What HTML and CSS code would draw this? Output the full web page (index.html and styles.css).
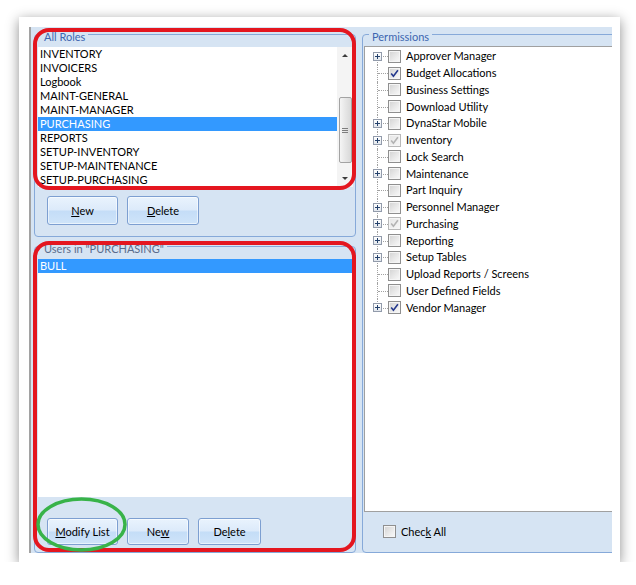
FILE: index.html
```html
<!DOCTYPE html>
<html>
<head>
<meta charset="utf-8">
<title>Roles</title>
<link rel="stylesheet" href="styles.css">
</head>
<body>
<div class="card">
  <div class="app">
    <div class="left">
      <div class="group roles">
        <div class="group-title">All Roles</div>
        <div class="listbox list-roles">
          <div class="items">
            <div class="item">INVENTORY</div>
            <div class="item">INVOICERS</div>
            <div class="item">Logbook</div>
            <div class="item">MAINT-GENERAL</div>
            <div class="item">MAINT-MANAGER</div>
            <div class="item sel">PURCHASING</div>
            <div class="item">REPORTS</div>
            <div class="item">SETUP-INVENTORY</div>
            <div class="item">SETUP-MAINTENANCE</div>
            <div class="item">SETUP-PURCHASING</div>
          </div>
          <div class="vscroll">
            <div class="arr up"></div>
            <div class="sgap"></div>
            <div class="thumb"><span class="grip"></span></div>
            <div class="sfill"></div>
            <div class="arr down"></div>
          </div>
        </div>
        <div class="buttons">
          <button class="btn b71"><u>N</u>ew</button>
          <button class="btn b72"><u>D</u>elete</button>
        </div>
      </div>
      <div class="group users">
        <div class="group-title muted">Users in "PURCHASING"</div>
        <div class="listbox list-users">
          <div class="items">
            <div class="item sel">BULL</div>
          </div>
        </div>
        <div class="buttons">
          <button class="btn b71"><u>M</u>odify List</button>
          <button class="btn b62">Ne<u>w</u></button>
          <button class="btn b63">De<u>l</u>ete</button>
        </div>
      </div>
    </div>
    <div class="right">
      <div class="group perms">
        <div class="group-title">Permissions</div>
        <div class="tree">
          <div class="row first"><span class="exp-cell"><span class="exp"></span></span><span class="cb"></span><span class="label">Approver Manager</span></div>
          <div class="row"><span class="exp-cell"></span><span class="cb"><svg viewBox="0 0 11 11"><path d="M2.2 5.6 L4.4 8.2 L8.9 2.3"/></svg></span><span class="label">Budget Allocations</span></div>
          <div class="row"><span class="exp-cell"></span><span class="cb"></span><span class="label">Business Settings</span></div>
          <div class="row"><span class="exp-cell"></span><span class="cb"></span><span class="label">Download Utility</span></div>
          <div class="row"><span class="exp-cell"><span class="exp"></span></span><span class="cb"></span><span class="label">DynaStar Mobile</span></div>
          <div class="row"><span class="exp-cell"><span class="exp"></span></span><span class="cb dim"><svg viewBox="0 0 11 11"><path d="M2.2 5.6 L4.4 8.2 L8.9 2.3"/></svg></span><span class="label">Inventory</span></div>
          <div class="row"><span class="exp-cell"></span><span class="cb"></span><span class="label">Lock Search</span></div>
          <div class="row"><span class="exp-cell"><span class="exp"></span></span><span class="cb"></span><span class="label">Maintenance</span></div>
          <div class="row"><span class="exp-cell"></span><span class="cb"></span><span class="label">Part Inquiry</span></div>
          <div class="row"><span class="exp-cell"><span class="exp"></span></span><span class="cb"></span><span class="label">Personnel Manager</span></div>
          <div class="row"><span class="exp-cell"><span class="exp"></span></span><span class="cb dim"><svg viewBox="0 0 11 11"><path d="M2.2 5.6 L4.4 8.2 L8.9 2.3"/></svg></span><span class="label">Purchasing</span></div>
          <div class="row"><span class="exp-cell"><span class="exp"></span></span><span class="cb"></span><span class="label">Reporting</span></div>
          <div class="row"><span class="exp-cell"><span class="exp"></span></span><span class="cb"></span><span class="label">Setup Tables</span></div>
          <div class="row"><span class="exp-cell"></span><span class="cb"></span><span class="label">Upload Reports / Screens</span></div>
          <div class="row"><span class="exp-cell"></span><span class="cb"></span><span class="label">User Defined Fields</span></div>
          <div class="row last"><span class="exp-cell"><span class="exp"></span></span><span class="cb"><svg viewBox="0 0 11 11"><path d="M2.2 5.6 L4.4 8.2 L8.9 2.3"/></svg></span><span class="label">Vendor Manager</span></div>
        </div>
        <div class="checkall"><span class="cb"></span><span class="label">Chec<u>k</u> All</span></div>
      </div>
    </div>
  </div>
  <svg class="annot" width="601" height="545" viewBox="0 0 601 545">
    <rect x="16" y="13" width="319" height="158" rx="14" ry="14" fill="none" stroke="#e4161f" stroke-width="4"/>
    <rect x="16" y="226" width="319" height="307" rx="14" ry="14" fill="none" stroke="#e4161f" stroke-width="4"/>
    <ellipse cx="62.5" cy="507.5" rx="43.5" ry="25.5" fill="none" stroke="#38b349" stroke-width="3.5"/>
  </svg>
</div>
</body>
</html>
```

FILE: styles.css
```css
* { box-sizing: border-box; }
html, body { margin: 0; padding: 0; background: #fff; }
body {
  font-family: "Lato", "Noto Sans", sans-serif;
  font-size: 11px;
  color: #000;
}
.card {
  position: relative;
  margin: 17px 0 0 19px;
  width: 601px;
  height: 545px;
  padding: 10px 8px 9px 10px;
  background: #fff;
  box-shadow: 0 3px 12px rgba(0, 0, 0, 0.45);
}
.app {
  display: flex;
  height: 526px;
  background: #d6e4f3;
  border-left: 2px solid #a2a2a2;
  overflow: hidden;
}
.left {
  width: 331px;
  flex: none;
  padding: 7px 6px 0 3px;
}
.right {
  flex: 1;
  padding-top: 7px;
}
.group {
  position: relative;
  border: 1px solid #86a9d9;
  border-radius: 4px;
}
.group-title {
  position: absolute;
  left: 6px;
  top: -5px;
  padding: 0 3px;
  line-height: 14px;
  background: #d6e4f3;
  color: #3d66b0;
  white-space: nowrap;
}
.group-title.muted { color: #5a6c8c; }
.roles { height: 203px; padding: 12px 2px 0 3px; }
.users { height: 307px; margin-top: 9px; padding: 12px 2px 0 3px; }
.listbox { display: flex; background: #fff; }
.list-roles { height: 140px; }
.list-users { height: 238px; }
.items { flex: 1; }
.item {
  height: 14px;
  line-height: 14px;
  padding-left: 2px;
  white-space: nowrap;
}
.item.sel { background: #3399ff; color: #fff; }

.vscroll {
  width: 16px;
  flex: none;
  display: flex;
  flex-direction: column;
  align-items: center;
  background: #f4f4f4;
}
.arr {
  width: 16px;
  height: 17px;
  display: flex;
  align-items: center;
  justify-content: center;
}
.arr.up::before {
  content: "";
  border-left: 3px solid transparent;
  border-right: 3px solid transparent;
  border-bottom: 3px solid #3c3c3c;
}
.arr.down::before {
  content: "";
  border-left: 3px solid transparent;
  border-right: 3px solid transparent;
  border-top: 3px solid #3c3c3c;
}
.sgap { height: 33px; }
.sfill { flex: 1; }
.thumb {
  width: 13px;
  height: 66px;
  border: 1px solid #a3a3a3;
  border-radius: 2px;
  background: linear-gradient(90deg, #f5f5f5, #e6e6e6 50%, #d8d8d8);
  display: flex;
  align-items: center;
  justify-content: center;
}
.grip {
  width: 6px;
  height: 5px;
  background: repeating-linear-gradient(#7d7d7d 0 1px, transparent 1px 2px);
}

.buttons { display: flex; gap: 9px; padding-left: 9px; }
.roles .buttons { margin-top: 9px; }
.users .buttons { margin-top: 21px; }
.btn {
  height: 29px;
  padding: 0;
  font: inherit;
  color: #000;
  border: 1px solid #7d9fd1;
  border-radius: 3px;
  background: linear-gradient(#e9f3fd 0%, #dceafa 48%, #c4ddf7 52%, #cfe4f9 100%);
  box-shadow: inset 0 0 0 1px rgba(255, 255, 255, 0.55);
}
.users .btn { height: 27px; }
.b71 { width: 71px; }
.b72 { width: 72px; }
.b62 { width: 62px; }
.b63 { width: 63px; }

.perms { width: 270px; height: 519px; padding: 11px 0 0 1px; }
.tree {
  height: 466px;
  border: 1px solid #a0a0a0;
  border-right: none;
  background: #fff;
  padding-top: 1px;
}
.row {
  position: relative;
  display: flex;
  align-items: center;
  height: 16.75px;
  white-space: nowrap;
}
.row::before {
  content: "";
  position: absolute;
  left: 12px;
  top: 0;
  bottom: 0;
  border-left: 1px dotted #a2a2a2;
}
.row.first::before { top: 50%; }
.row.last::before { bottom: 50%; }
.row::after {
  content: "";
  position: absolute;
  left: 13px;
  width: 10px;
  top: 50%;
  border-top: 1px dotted #a2a2a2;
}
.exp-cell {
  width: 23px;
  flex: none;
  display: flex;
  align-items: center;
  padding-left: 8px;
}
.exp {
  position: relative;
  z-index: 1;
  width: 9px;
  height: 9px;
  border: 1px solid #929bab;
  background: linear-gradient(#ffffff, #e2e7ed);
}
.exp::before {
  content: "";
  position: absolute;
  left: 1px;
  top: 3px;
  width: 5px;
  height: 1px;
  background: #24416c;
}
.exp::after {
  content: "";
  position: absolute;
  left: 3px;
  top: 1px;
  width: 1px;
  height: 5px;
  background: #24416c;
}
.cb {
  width: 13px;
  height: 13px;
  flex: none;
  border: 1px solid #8f8f8f;
  background: linear-gradient(135deg, #d2d2d2 0%, #e9e9e9 55%, #fafafa 100%);
  box-shadow: inset 0 0 0 1px #f5f5f5;
  position: relative;
  z-index: 1;
}
.cb svg { display: block; width: 11px; height: 11px; }
.cb svg path { fill: none; stroke: #23378c; stroke-width: 1.6; }
.cb.dim { border-color: #b9b9b9; background: linear-gradient(135deg, #e6e6e6, #f7f7f7); }
.cb.dim svg path { stroke: #b3b3b3; }
.label { margin-left: 5px; line-height: 14px; }

.checkall {
  display: flex;
  align-items: center;
  height: 13px;
  margin-top: 13px;
  padding-left: 19px;
}

.annot {
  position: absolute;
  left: 0;
  top: 0;
  pointer-events: none;
}
```
